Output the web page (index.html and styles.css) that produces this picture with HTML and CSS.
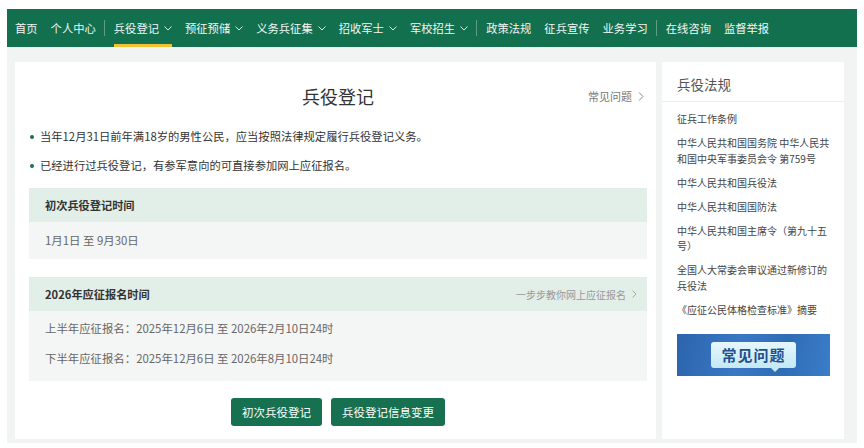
FILE: index.html
```html
<!DOCTYPE html>
<html lang="zh-CN">
<head>
<meta charset="utf-8">
<title>兵役登记</title>
<link rel="stylesheet" href="styles.css">
</head>
<body>
<div class="page">
  <div class="nav">
    <a class="nav_item">首页</a>
    <a class="nav_item">个人中心</a>
    <span class="nav_sep"></span>
    <a class="nav_item active">兵役登记<svg class="chev" width="8" height="5" viewBox="0 0 8 5"><polyline points="0.5,0.5 4,4 7.5,0.5"/></svg></a>
    <a class="nav_item">预征预储<svg class="chev" width="8" height="5" viewBox="0 0 8 5"><polyline points="0.5,0.5 4,4 7.5,0.5"/></svg></a>
    <a class="nav_item">义务兵征集<svg class="chev" width="8" height="5" viewBox="0 0 8 5"><polyline points="0.5,0.5 4,4 7.5,0.5"/></svg></a>
    <a class="nav_item">招收军士<svg class="chev" width="8" height="5" viewBox="0 0 8 5"><polyline points="0.5,0.5 4,4 7.5,0.5"/></svg></a>
    <a class="nav_item">军校招生<svg class="chev" width="8" height="5" viewBox="0 0 8 5"><polyline points="0.5,0.5 4,4 7.5,0.5"/></svg></a>
    <span class="nav_sep"></span>
    <a class="nav_item">政策法规</a>
    <a class="nav_item">征兵宣传</a>
    <a class="nav_item">业务学习</a>
    <span class="nav_sep"></span>
    <a class="nav_item">在线咨询</a>
    <a class="nav_item">监督举报</a>
  </div>

  <div class="content">
    <div class="main_card">
      <div class="title_row">
        <span></span>
        <h1 class="title">兵役登记</h1>
        <a class="faq_link">常见问题<svg width="6" height="9" viewBox="0 0 6 9"><polyline points="1,0.5 5,4.5 1,8.5"/></svg></a>
      </div>
      <ul class="notes">
        <li>当年12月31日前年满18岁的男性公民，应当按照法律规定履行兵役登记义务。</li>
        <li>已经进行过兵役登记，有参军意向的可直接参加网上应征报名。</li>
      </ul>

      <div class="box">
        <div class="box_head"><span>初次兵役登记时间</span></div>
        <div class="box_body">
          <p>1月1日 至 9月30日</p>
        </div>
      </div>

      <div class="box box_second">
        <div class="box_head">
          <span>2026年应征报名时间</span>
          <a class="step_link">一步步教你网上应征报名<svg width="5" height="8" viewBox="0 0 5 8"><polyline points="0.5,0.5 4,4 0.5,7.5"/></svg></a>
        </div>
        <div class="box_body two_lines">
          <p>上半年应征报名：2025年12月6日 至 2026年2月10日24时</p>
          <p>下半年应征报名：2025年12月6日 至 2026年8月10日24时</p>
        </div>
      </div>

      <div class="actions">
        <button class="btn">初次兵役登记</button>
        <button class="btn">兵役登记信息变更</button>
      </div>
    </div>

    <div class="side_card">
      <div class="side_title">兵役法规</div>
      <ul class="law_list">
        <li>征兵工作条例</li>
        <li>中华人民共和国国务院 中华人民共和国中央军事委员会令 第759号</li>
        <li>中华人民共和国兵役法</li>
        <li>中华人民共和国国防法</li>
        <li>中华人民共和国主席令（第九十五号）</li>
        <li>全国人大常委会审议通过新修订的兵役法</li>
        <li>《应征公民体格检查标准》摘要</li>
      </ul>
      <div class="banner">
        <div class="banner_bubble">常见问题</div>
      </div>
    </div>
  </div>
</div>
</body>
</html>
```

FILE: styles.css
```css
body {
    margin: 0;
    background: #fff;
    font-family: "Noto Sans CJK SC", "Noto Sans", sans-serif;
    color: #333;
}
.page {
    width: 850px;
    margin: 9px 0 0 7px;
}

/* nav */
.nav {
    display: flex;
    align-items: stretch;
    height: 38px;
    padding-left: 8px;
    background: #12704f;
}
.nav_item {
    display: flex;
    align-items: center;
    margin-right: 13px;
    color: #f2f7f4;
    font-size: 11.3px;
    white-space: nowrap;
    box-sizing: border-box;
    border-top: 3px solid transparent;
    border-bottom: 3px solid transparent;
}
.nav_item.active {
    border-bottom-color: #f2c230;
}
.chev {
    margin-left: 5px;
    fill: none;
    stroke: #d7e9e0;
    stroke-width: 1;
}
.nav_sep {
    width: 1px;
    height: 16px;
    align-self: center;
    margin: 0 9px 0 -5px;
    background: #5f9e86;
}

/* content */
.content {
    display: flex;
    gap: 6px;
    padding: 15px 13px 4px 8px;
    background: #f2f4f3;
}
.main_card {
    width: 641px;
    box-sizing: border-box;
    padding: 22px 9px 13px 14px;
    background: #fff;
}
.title_row {
    display: grid;
    grid-template-columns: 1fr auto 1fr;
    align-items: center;
    height: 24px;
}
.title {
    margin: 0;
    font-size: 18px;
    font-weight: normal;
    line-height: 24px;
    color: #333;
}
.faq_link {
    justify-self: end;
    display: flex;
    align-items: center;
    gap: 6px;
    margin-right: 3px;
    font-size: 11px;
    color: #777;
}
.faq_link svg {
    fill: none;
    stroke: #888;
    stroke-width: 1;
}
.notes {
    margin: 14px 0 8px;
    padding: 0;
    list-style: none;
}
.notes li {
    position: relative;
    padding-left: 11px;
    font-size: 11.3px;
    line-height: 29px;
    color: #333;
}
.notes li::before {
    content: "";
    position: absolute;
    left: 1px;
    top: 13px;
    width: 4px;
    height: 4px;
    border-radius: 50%;
    background: #17704f;
}
.box_second {
    margin-top: 18px;
}
.box_head {
    display: flex;
    justify-content: space-between;
    align-items: center;
    height: 34px;
    padding: 0 10px 0 16px;
    background: #e2eee8;
    font-size: 11.2px;
    font-weight: bold;
    color: #333;
}
.step_link {
    display: flex;
    align-items: center;
    gap: 6px;
    font-size: 10px;
    font-weight: normal;
    color: #999;
}
.step_link svg {
    fill: none;
    stroke: #aaa;
    stroke-width: 1;
}
.box_body {
    padding: 0 16px;
    background: #f4f6f5;
}
.box_body p {
    margin: 0;
    font-size: 11.4px;
    line-height: 37px;
    color: #666;
}
.box_body.two_lines {
    padding-top: 2px;
    padding-bottom: 8px;
}
.box_body.two_lines p {
    line-height: 30px;
}
.actions {
    display: flex;
    justify-content: center;
    gap: 9px;
    margin-top: 17px;
}
.btn {
    height: 28px;
    padding: 0 11px;
    border: none;
    border-radius: 3px;
    background: #17704f;
    color: #fff;
    font-family: inherit;
    font-size: 11.5px;
}

/* sidebar */
.side_card {
    width: 182px;
    background: #fff;
}
.side_title {
    height: 40px;
    padding: 4px 0 0 15px;
    box-sizing: border-box;
    border-bottom: 1px solid #ececec;
    font-size: 13.5px;
    line-height: 36px;
    color: #555;
}
.law_list {
    margin: 0;
    padding: 9px 0 0 15px;
    list-style: none;
}
.law_list li {
    width: 156px;
    margin-bottom: 8.5px;
    font-size: 10px;
    line-height: 15.5px;
    color: #444;
}
.banner {
    display: flex;
    justify-content: center;
    align-items: center;
    width: 153px;
    height: 42px;
    margin: 17px 0 0 15px;
    background: linear-gradient(100deg, #2c64ad 0%, #3a78c4 40%, #2f6cb6 70%, #3b7dc9 100%);
}
.banner_bubble {
    position: relative;
    width: 85px;
    height: 26px;
    border-radius: 3px;
    background: linear-gradient(180deg, #e6f7fc, #c4e8f6);
    color: #1f4f8e;
    font-size: 15px;
    font-weight: bold;
    line-height: 26px;
    text-align: center;
    letter-spacing: 1px;
}
.banner_bubble::after {
    content: "";
    position: absolute;
    left: 60px;
    bottom: -4px;
    border-left: 4px solid transparent;
    border-right: 4px solid transparent;
    border-top: 4px solid #c4e8f6;
}
```
